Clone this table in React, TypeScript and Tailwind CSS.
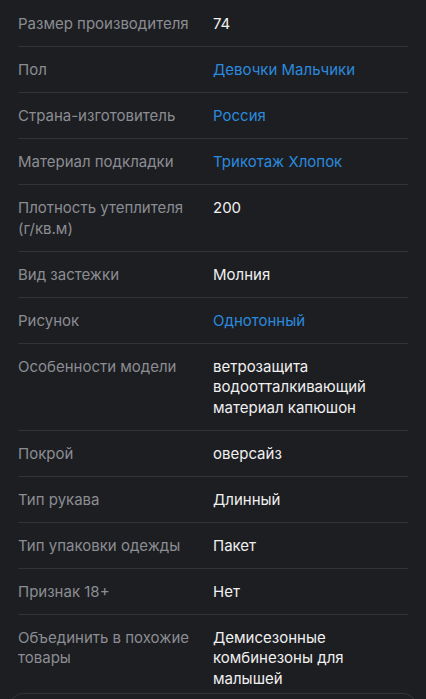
const rows: { label: string; value: string; link?: boolean }[] = [
  { label: "Размер производителя", value: "74" },
  { label: "Пол", value: "Девочки Мальчики", link: true },
  { label: "Страна-изготовитель", value: "Россия", link: true },
  { label: "Материал подкладки", value: "Трикотаж Хлопок", link: true },
  { label: "Плотность утеплителя (г/кв.м)", value: "200" },
  { label: "Вид застежки", value: "Молния" },
  { label: "Рисунок", value: "Однотонный", link: true },
  { label: "Особенности модели", value: "ветрозащита водоотталкивающий материал капюшон" },
  { label: "Покрой", value: "оверсайз" },
  { label: "Тип рукава", value: "Длинный" },
  { label: "Тип упаковки одежды", value: "Пакет" },
  { label: "Признак 18+", value: "Нет" },
  { label: "Объединить в похожие товары", value: "Демисезонные комбинезоны для малышей" },
];

export default function App() {
  return (
    <div
      className="w-[426px] h-[699px] overflow-hidden bg-[#1d1e22] text-[15px] leading-[20.5px]"
      style={{ fontFamily: "Inter, 'Noto Sans', sans-serif" }}
    >
      <div className="px-[18px] pt-px">
        {rows.map((row, i) => (
          <div
            key={i}
            className={`grid grid-cols-[180px_1fr] gap-[15px] pt-[13px] ${i > 0 ? "border-t border-[#313338]" : ""} ${i === rows.length - 1 ? "pb-[4px]" : "pb-[11.5px]"}`}
          >
            <div className="text-[#8b8d92]">{row.label}</div>
            <div className={row.link ? "text-[#2a8ade]" : "text-[#f0f0f0]"}>{row.value}</div>
          </div>
        ))}
      </div>
      <div className="mx-2 h-10 rounded-t-[16px] border border-[#313338] border-b-0" />
    </div>
  );
}
